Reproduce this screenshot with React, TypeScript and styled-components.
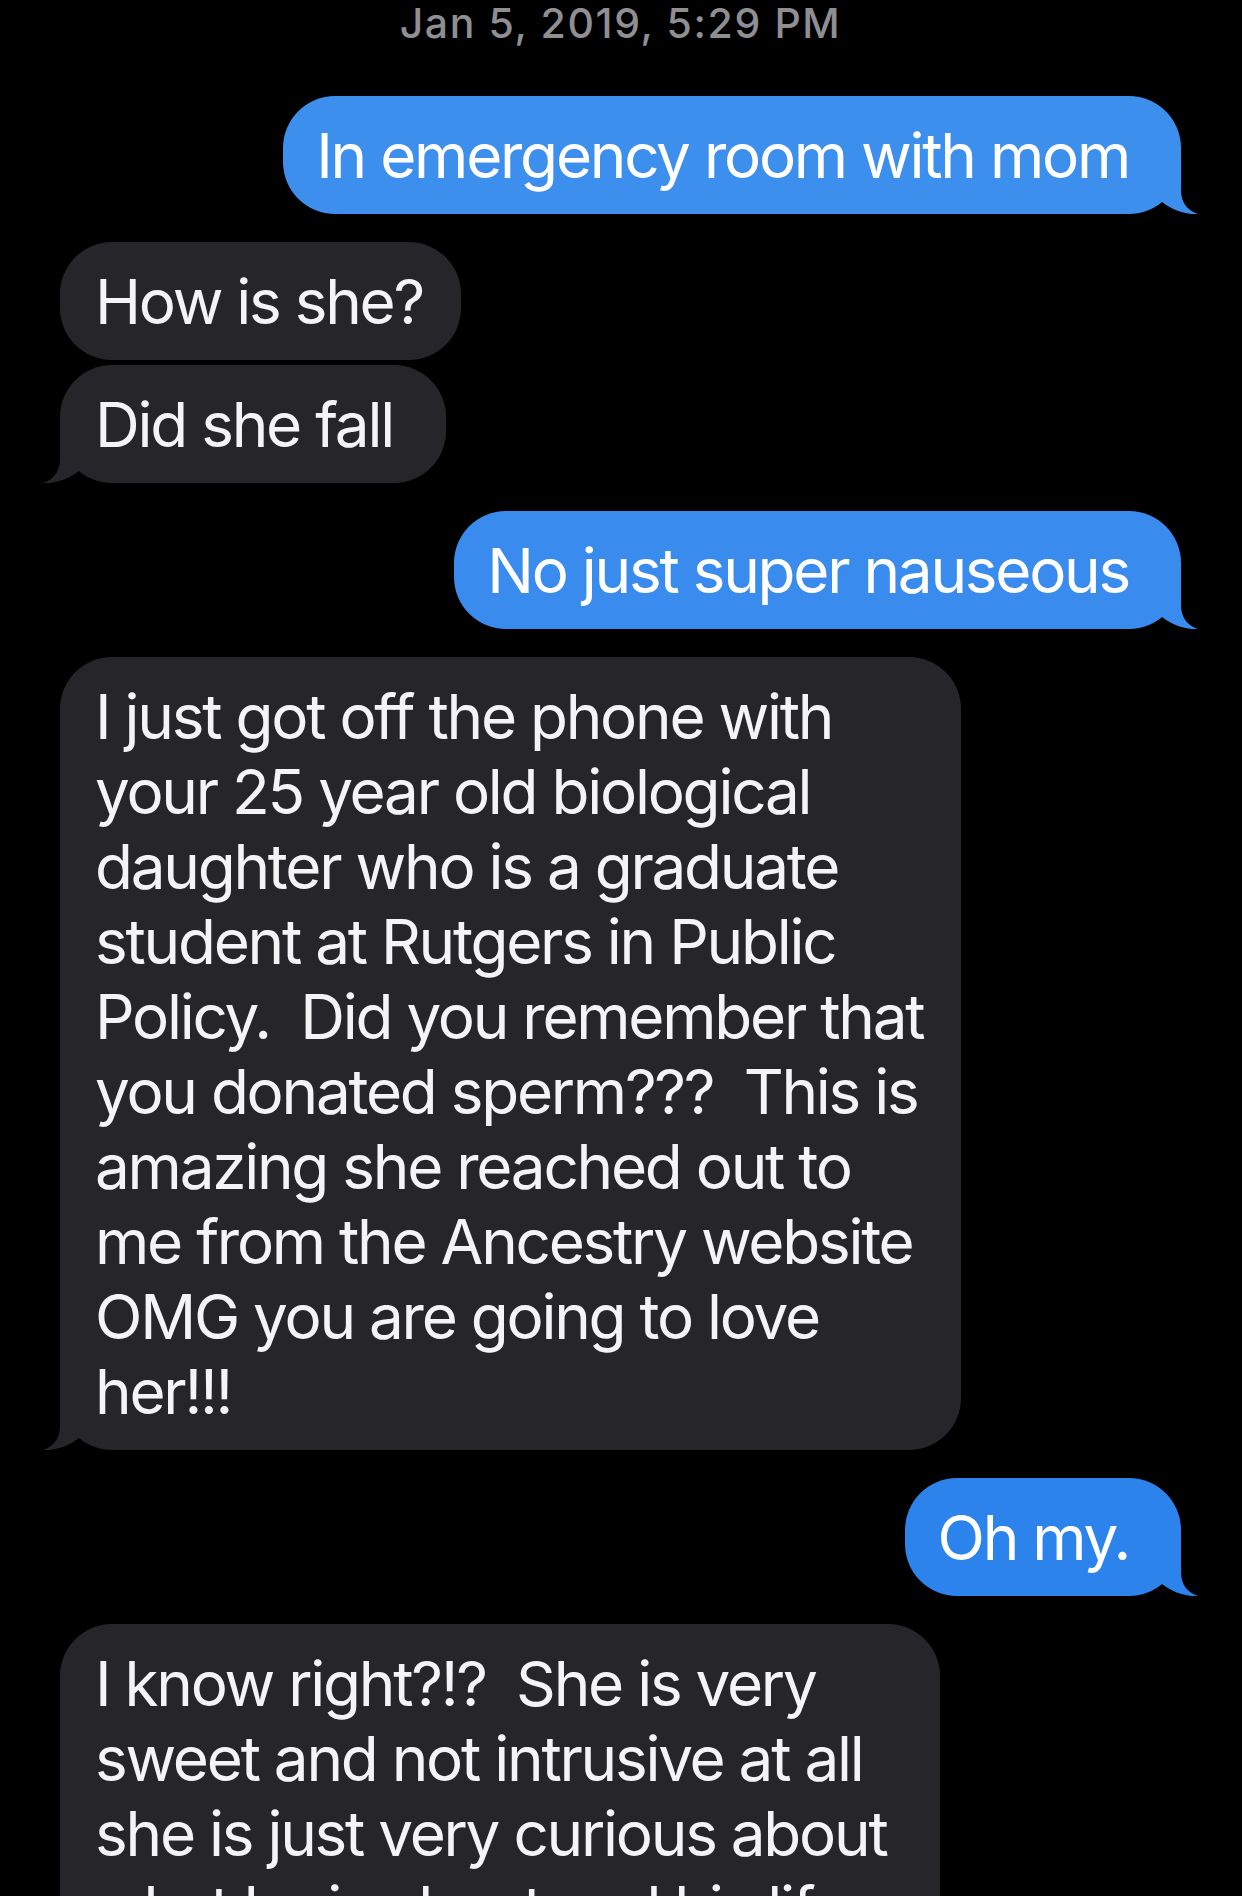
import React from "react";
import styled, { createGlobalStyle } from "styled-components";

const GlobalStyle = createGlobalStyle`
  html, body {
    margin: 0;
    padding: 0;
    background: #000;
    overflow: hidden;
  }
  body {
    font-family: Inter, "Noto Sans", "Liberation Sans", sans-serif;
    -webkit-font-smoothing: antialiased;
  }
`;

const Screen = styled.main`
  width: 1242px;
  height: 1896px;
  overflow: hidden;
  background: #000;
  box-sizing: border-box;
  padding: 0 61px 0 60px;
  display: flex;
  flex-direction: column;
`;

const Timestamp = styled.div`
  font-size: 41px;
  line-height: 46px;
  font-weight: 500;
  letter-spacing: 1.6px;
  color: #8e8e93;
  text-align: center;
  margin-bottom: 50px;
`;

const Row = styled.div<{ $me: boolean; $gap: number }>`
  display: flex;
  justify-content: ${(p) => (p.$me ? "flex-end" : "flex-start")};
  margin-top: ${(p) => p.$gap}px;
  flex-shrink: 0;
`;

const Bubble = styled.div<{ $me: boolean; $bg: string }>`
  position: relative;
  background: ${(p) => p.$bg};
  color: ${(p) => (p.$me ? "#ffffff" : "#f4f4f6")};
  border-radius: 52px;
  padding: ${(p) => (p.$me ? "22px 52px 21px 33px" : "22px 38px 21px 35px")};
  font-size: 62px;
  line-height: 75px;
  font-weight: 400;
  letter-spacing: -2.25px;
  white-space: pre;
`;

const BubbleText = styled.span`
  position: relative;
  z-index: 1;
`;

const TailSvg = styled.svg<{ $me: boolean }>`
  position: absolute;
  bottom: 0;
  width: 50px;
  height: 60px;
  z-index: 0;
  ${(p) => (p.$me ? "right: -18px;" : "left: -18px; transform: scaleX(-1);")}
`;

const Tail: React.FC<{ me: boolean; color: string }> = ({ me, color }) => (
  <TailSvg $me={me} viewBox="0 0 50 60" aria-hidden="true">
    <path
      d="M0 0 H32 V36 C32 50 40 57 49 60 C40 61 24 57 13 48 L0 48 Z"
      fill={color}
    />
  </TailSvg>
);

type Msg = {
  me: boolean;
  text: string;
  tail: boolean;
  gap: number;
  bg: string;
};

const GRAY = "#262529";

const messages: Msg[] = [
  { me: true, text: "In emergency room with mom", tail: true, gap: 0, bg: "#3d8fee" },
  { me: false, text: "How is she?", tail: false, gap: 28, bg: GRAY },
  { me: false, text: "Did she fall ", tail: true, gap: 5, bg: GRAY },
  { me: true, text: "No just super nauseous", tail: true, gap: 28, bg: "#3a8bee" },
  {
    me: false,
    text: [
      "I just got off the phone with",
      "your 25 year old biological",
      "daughter who is a graduate",
      "student at Rutgers in Public",
      "Policy.  Did you remember that",
      "you donated sperm???  This is",
      "amazing she reached out to",
      "me from the Ancestry website",
      "OMG you are going to love",
      "her!!!",
    ].join("\n"),
    tail: true,
    gap: 28,
    bg: GRAY,
  },
  { me: true, text: "Oh my.", tail: true, gap: 28, bg: "#2c83ec" },
  {
    me: false,
    text: [
      "I know right?!?  She is very",
      "sweet and not intrusive at all",
      "she is just very curious about ",
      "what he is about and his life",
      "and family history.",
    ].join("\n"),
    tail: false,
    gap: 28,
    bg: GRAY,
  },
];

export default function App() {
  return (
    <>
      <GlobalStyle />
      <Screen>
        <Timestamp>Jan 5, 2019, 5:29 PM</Timestamp>
        {messages.map((m, i) => (
          <Row key={i} $me={m.me} $gap={m.gap}>
            <Bubble $me={m.me} $bg={m.bg}>
              {m.tail && <Tail me={m.me} color={m.bg} />}
              <BubbleText>{m.text}</BubbleText>
            </Bubble>
          </Row>
        ))}
      </Screen>
    </>
  );
}
